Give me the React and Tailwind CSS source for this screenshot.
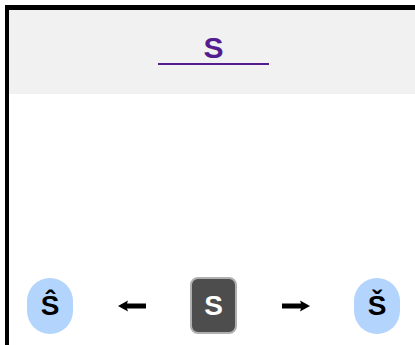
import React from "react";

const Arrow = ({ dir = "left" }) => (
  <svg
    width="28"
    height="12"
    viewBox="0 0 28 12"
    className={dir === "right" ? "rotate-180" : ""}
  >
    <path d="M0 6 L10 0.5 L9 3.5 L28 3.5 L28 8.5 L9 8.5 L10 11.5 Z" fill="#000" />
  </svg>
);

const Pill = ({ children }) => (
  <div className="w-[46px] h-[56px] rounded-full bg-[#b3d4fc] flex items-center justify-center text-[28px] font-bold text-black">
    {children}
  </div>
);

const App = () => {
  return (
    <div
      className="h-[345px] w-[415px] overflow-hidden bg-white pt-[5px] pl-[5px]"
      style={{ fontFamily: '"Liberation Sans", Arial, sans-serif' }}
    >
      <div className="w-[413px] h-[345px] border-t-[5px] border-l-4 border-black flex flex-col">
        {/* header */}
        <div className="h-[84px] bg-[#f1f1f1] flex justify-center pt-[21px]">
          <div className="w-[111px] h-[34px] border-b-2 border-[#541d8f] text-center text-[30px] leading-[34px] font-bold text-[#541d8f]">
            S
          </div>
        </div>

        {/* keys */}
        <div className="w-[373px] flex items-center justify-between ml-[18px] mt-[183px]">
          <Pill>Ŝ</Pill>
          <Arrow dir="left" />
          <div className="w-[47px] h-[57px] rounded-[8px] bg-[#4d4d4d] border-2 border-[#b0b0b0] flex items-center justify-center text-[28px] font-bold text-white">
            S
          </div>
          <Arrow dir="right" />
          <Pill>Š</Pill>
        </div>
      </div>
    </div>
  );
};

export default App;
